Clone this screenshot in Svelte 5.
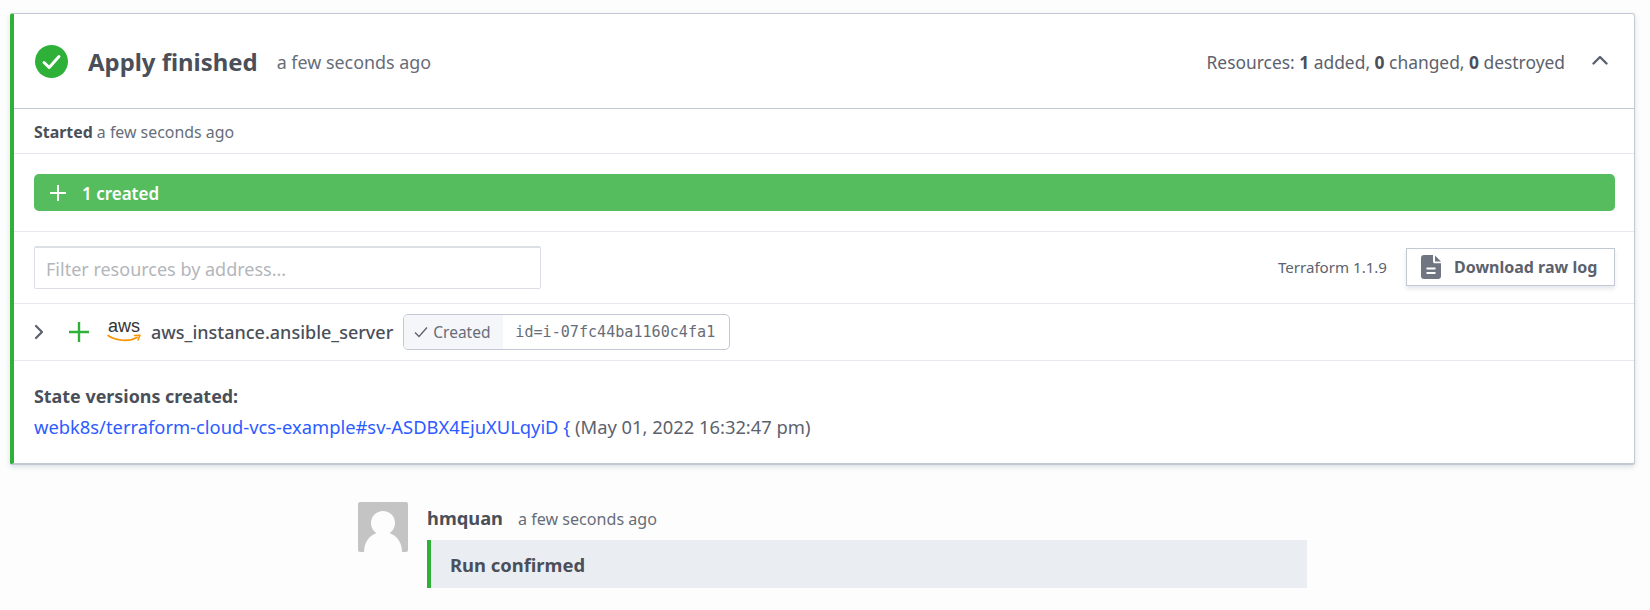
<script>
  let resources = [
    { label: 'added', count: 1 },
    { label: 'changed', count: 0 },
    { label: 'destroyed', count: 0 }
  ];
</script>

<div class="page">
  <section class="card">
    <header class="head">
      <svg class="status" viewBox="0 0 33 33" aria-hidden="true">
        <circle cx="16.5" cy="16.5" r="16.5" fill="#2eb039" />
        <path d="M9 17.5l5.2 5L24 11.5" fill="none" stroke="#fff" stroke-width="3" stroke-linecap="round" stroke-linejoin="round" />
      </svg>
      <h1>Apply finished</h1>
      <span class="ago">a few seconds ago</span>
      <div class="summary">
        Resources:
        {#each resources as r, i}
          <b>{r.count}</b> {r.label}{i < resources.length - 1 ? ', ' : ''}
        {/each}
      </div>
      <svg class="caret" viewBox="0 0 16 10" aria-hidden="true">
        <path d="M1.500 8.500L8 2l6.500 6.500" fill="none" stroke="#5a6270" stroke-width="2.400" stroke-linecap="round" stroke-linejoin="round" />
      </svg>
    </header>

    <div class="started"><b>Started</b> a few seconds ago</div>

    <div class="bar-row">
      <div class="bar">
        <svg viewBox="0 0 18 18" aria-hidden="true">
          <path d="M9 1v16M1 9h16" fill="none" stroke="#fff" stroke-width="2" />
        </svg>
        <span>1 created</span>
      </div>
    </div>

    <div class="tools">
      <input class="filter" placeholder="Filter resources by address..." />
      <span class="version">Terraform 1.1.9</span>
      <button class="download">
        <svg viewBox="0 0 20 24" aria-hidden="true">
          <path fill="#6f7682" fill-rule="evenodd" d="M3 0h9v6.500c0 1 .8 1.800 1.800 1.800H20V21a3 3 0 0 1-3 3H3a3 3 0 0 1-3-3V3a3 3 0 0 1 3-3zM5.500 12.500v2h9v-2zM5.500 17v2h9v-2zM14 0.500l6 6h-6z" />
        </svg>
        Download raw log
      </button>
    </div>

    <div class="resource">
      <svg class="chevron" viewBox="0 0 10 16" aria-hidden="true">
        <path d="M2 2l6 6-6 6" fill="none" stroke="#5a6270" stroke-width="2.200" stroke-linecap="round" stroke-linejoin="round" />
      </svg>
      <svg class="plus" viewBox="0 0 20 20" aria-hidden="true">
        <path d="M10 0v20M0 10h20" fill="none" stroke="#2eb039" stroke-width="2.400" />
      </svg>
      <span class="aws">
        <span class="aws-word">aws</span>
        <svg viewBox="0 0 34 9" aria-hidden="true">
          <path d="M1 1.500C9 7 22 8 30 3.500" fill="none" stroke="#f79400" stroke-width="1.600" stroke-linecap="round" />
          <path d="M27.500 1.500L33 1.200 31 6" fill="none" stroke="#f79400" stroke-width="1.500" stroke-linecap="round" stroke-linejoin="round" />
        </svg>
      </span>
      <span class="address">aws_instance.ansible_server</span>
      <span class="tag">
        <span class="tag-state">
          <svg viewBox="0 0 14 12" aria-hidden="true">
            <path d="M1 6.500L5 10.500 13 1.500" fill="none" stroke="#5a6270" stroke-width="1.300" />
          </svg>
          Created
        </span>
        <code>id=i-07fc44ba1160c4fa1</code>
      </span>
    </div>

    <div class="versions">
      <h2>State versions created:</h2>
      <p><a href="#sv">webk8s/terraform-cloud-vcs-example#sv-ASDBX4EjuXULqyiD {'{'}</a> (May 01, 2022 16:32:47 pm)</p>
    </div>
  </section>

  <section class="comment">
    <svg class="avatar" viewBox="0 0 50 50" aria-hidden="true">
      <rect width="50" height="50" rx="2" fill="#c4c4c4" />
      <circle cx="25" cy="21" r="12" fill="#fdfdfd" />
      <path d="M6 50c0-12 8-20 19-20s19 8 19 20z" fill="#fdfdfd" />
    </svg>
    <div class="body">
      <div class="meta"><b>hmquan</b><span>a few seconds ago</span></div>
      <div class="message">Run confirmed</div>
    </div>
  </section>
</div>

<style>
  :global(body) {
    margin: 0;
    background: #fdfdfd;
  }

  .page {
    height: 610px;
    overflow: hidden;
    padding: 13px 15px 0 10px;
    box-sizing: border-box;
    font-family: "Noto Sans", "Open Sans", sans-serif;
    color: #4c5159;
  }

  .card {
    background: #fff;
    border: 1px solid #c2c8d4;
    border-left: 4px solid #2eb039;
    border-bottom-width: 2px;
    border-radius: 3px;
    box-shadow: 0 2px 5px rgba(120, 130, 150, 0.25);
  }

  .head {
    display: flex;
    align-items: center;
    height: 94px;
    padding: 0 26px 0 21px;
    border-bottom: 1px solid #c2c8d4;
  }

  .status {
    width: 33px;
    height: 33px;
    margin-right: 20px;
  }

  h1 {
    margin: 0 19px 0 0;
    font-size: 23.900px;
    font-weight: 700;
    color: #4a4f59;
  }

  .ago {
    font-size: 17.900px;
    color: #676d78;
    padding-top: 2px;
  }

  .summary {
    margin-left: auto;
    padding-top: 2px;
    font-size: 17.400px;
    color: #5c626d;
    white-space: pre-wrap;
  }

  .summary b {
    color: #4a4f59;
  }

  .caret {
    width: 16px;
    height: 10px;
    margin-left: 27px;
    margin-bottom: 3px;
  }

  .started {
    height: 44px;
    line-height: 46px;
    padding-left: 20px;
    font-size: 15.900px;
    color: #676d78;
    border-bottom: 1px solid #e6e8ee;
  }

  .started b {
    color: #4a4f59;
  }

  .bar-row {
    padding: 20px 19px 20px 20px;
    border-bottom: 1px solid #e6e8ee;
  }

  .bar {
    display: flex;
    align-items: center;
    height: 37px;
    padding-left: 15px;
    gap: 15px;
    background: #55bd5d;
    border-radius: 5px;
    color: #fff;
    font-size: 17px;
    font-weight: 600;
  }

  .bar svg {
    width: 18px;
    height: 18px;
  }

  .bar span {
    padding-top: 2px;
  }

  .tools {
    display: flex;
    align-items: center;
    height: 71px;
    padding: 0 19px 0 20px;
    border-bottom: 1px solid #e6e8ee;
  }

  .filter {
    width: 507px;
    height: 43px;
    box-sizing: border-box;
    padding: 2px 11px 0;
    border: 1px solid #dcdfe6;
    border-top-width: 2px;
    border-radius: 2px;
    background: #fff;
    font-family: inherit;
    font-size: 18px;
  }

  .filter::placeholder {
    color: #b3b6bb;
  }

  .version {
    margin-left: auto;
    margin-right: 19px;
    margin-bottom: 2px;
    font-size: 15.100px;
    color: #5c626d;
  }

  .download {
    display: flex;
    align-items: center;
    gap: 13px;
    width: 209px;
    height: 38px;
    margin-bottom: 1px;
    padding: 0 0 0 14px;
    background: #fff;
    border: 1px solid #c2c8d4;
    box-shadow: 0 3px 4px rgba(120, 130, 150, 0.18);
    font-family: inherit;
    font-size: 16px;
    font-weight: 700;
    color: #5c626d;
  }

  .download svg {
    width: 20px;
    height: 24px;
  }

  .resource {
    display: flex;
    align-items: center;
    height: 56px;
    padding-left: 20px;
    border-bottom: 1px solid #e6e8ee;
  }

  .chevron {
    width: 10px;
    height: 16px;
    margin-right: 25px;
  }

  .plus {
    width: 20px;
    height: 20px;
    margin-right: 18px;
  }

  .aws {
    display: flex;
    flex-direction: column;
    align-items: center;
    width: 34px;
    margin-right: 10px;
    margin-top: -2px;
  }

  .aws-word {
    font-family: "Liberation Sans", sans-serif;
    font-size: 18px;
    line-height: 13px;
    color: #333;
  }

  .aws svg {
    width: 34px;
    height: 9px;
    margin-top: 1px;
  }

  .address {
    font-size: 18px;
    font-weight: 500;
    color: #4a4f59;
  }

  .tag {
    display: flex;
    align-items: stretch;
    height: 34px;
    margin-left: 10px;
    border: 1px solid #c2c8d4;
    border-radius: 5px;
    overflow: hidden;
  }

  .tag-state {
    display: flex;
    align-items: center;
    gap: 5px;
    width: 99px;
    box-sizing: border-box;
    padding-left: 10px;
    background: #f5f6f9;
    font-size: 15.500px;
    color: #676d78;
  }

  .tag-state svg {
    width: 14px;
    height: 12px;
  }

  code {
    display: flex;
    align-items: center;
    padding: 0 14px 0 12px;
    font-family: "DejaVu Sans Mono", monospace;
    font-size: 15.100px;
    color: #676d78;
  }

  .versions {
    padding: 23px 20px 24px;
  }

  h2 {
    margin: 0 0 7px;
    font-size: 17.900px;
    font-weight: 700;
    line-height: 24px;
    color: #4a4f59;
  }

  p {
    margin: 0;
    font-size: 18.350px;
    line-height: 24px;
    color: #5c626d;
  }

  a {
    color: #2d5bff;
    text-decoration: none;
  }

  .comment {
    display: flex;
    gap: 19px;
    width: 949px;
    margin: 37px 0 0 348px;
  }

  .avatar {
    width: 50px;
    height: 50px;
    flex: none;
  }

  .body {
    flex: 1;
  }

  .meta {
    display: flex;
    align-items: baseline;
    gap: 15px;
    height: 38px;
    line-height: 31px;
    font-size: 16.100px;
    color: #676d78;
  }

  .meta b {
    font-size: 18.300px;
    color: #4a4f59;
  }

  .message {
    height: 48px;
    line-height: 50px;
    padding-left: 19px;
    background: #eaedf2;
    border-left: 4px solid #2eb039;
    font-size: 18.400px;
    font-weight: 700;
    color: #4a4f59;
  }
</style>
